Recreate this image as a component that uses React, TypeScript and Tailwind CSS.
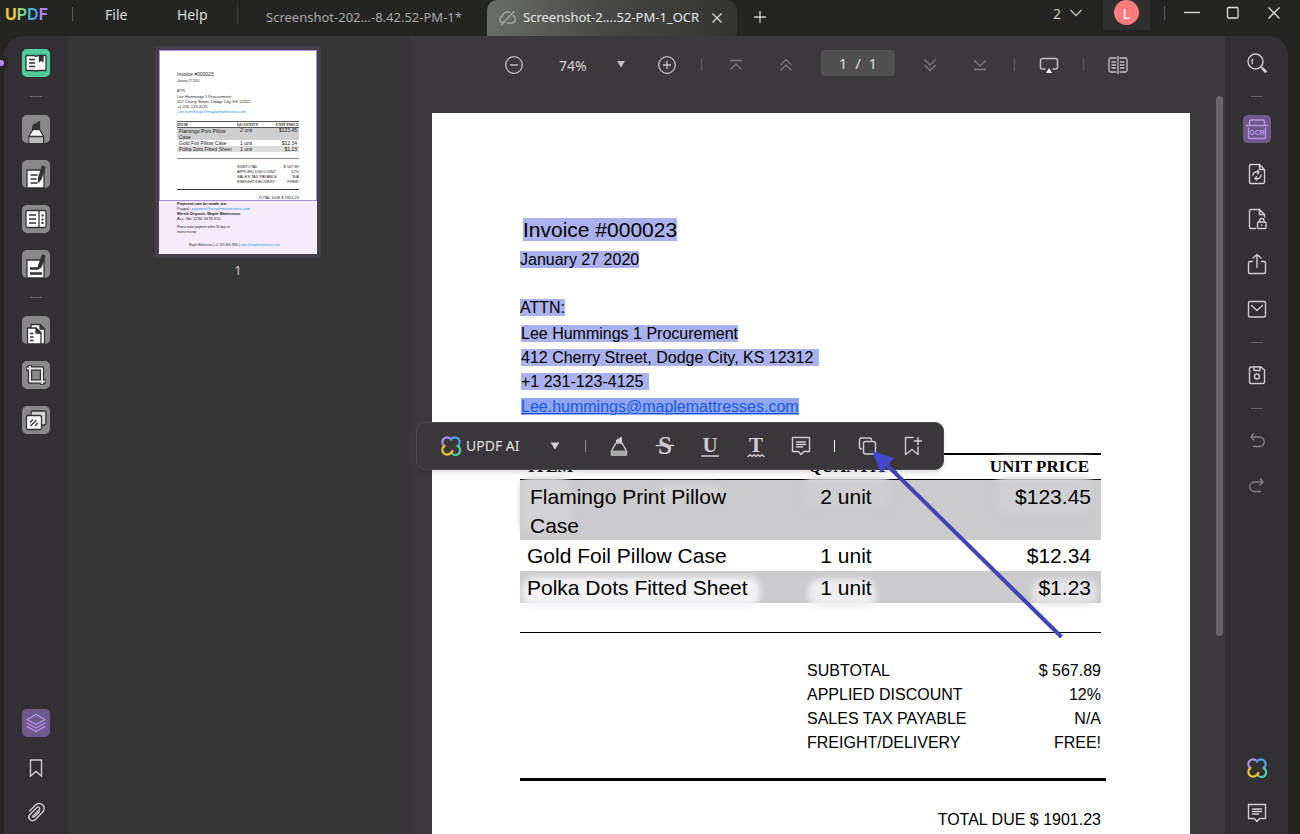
import { useState } from "react";
import type { ReactNode } from "react";
import clsx from "clsx";

interface IconProps {
  children: ReactNode;
  className?: string;
}

// Thin line icon on a 24px grid
function LineIcon({ children, className }: IconProps) {
  return (
    <svg
      width="24"
      height="24"
      viewBox="0 0 24 24"
      fill="none"
      stroke="currentColor"
      strokeWidth="1.4"
      strokeLinecap="round"
      strokeLinejoin="round"
      className={clsx("shrink-0 overflow-visible", className)}
      aria-hidden="true"
    >
      {children}
    </svg>
  );
}

// Filled tool tile on a 28px grid
function TileIcon({ children }: IconProps) {
  return (
    <svg
      width="28"
      height="28"
      viewBox="0 0 28 28"
      fill="none"
      stroke="#333133"
      strokeWidth="1.3"
      strokeLinejoin="round"
      aria-hidden="true"
    >
      {children}
    </svg>
  );
}

function CloverLogo() {
  return (
    <svg width="20" height="20" viewBox="0 0 20 20" fill="none" strokeWidth="2.2" strokeLinecap="round" className="shrink-0 overflow-visible" aria-hidden="true">
      <path d="M10 3.3A4.8 4.8 0 1 0 3.3 10" stroke="#b48cf0" />
      <path d="M10 3.3A4.8 4.8 0 1 1 16.7 10" stroke="#45a5e6" />
      <path d="M16.7 10A4.8 4.8 0 1 1 10.4 16.9" stroke="#4fd3a0" />
      <path d="M3.3 10A4.8 4.8 0 1 0 10 16.7l1.400-1.700" stroke="#f2c12e" />
    </svg>
  );
}

function CommentIcon() {
  return (
    <LineIcon>
      <path d="M3.5 3.5h17v14h-5.8L12 20.5l-2.700-3H3.500z" />
      <path d="M7.500 8h9M7.500 10.500h9M7.500 13h6" />
    </LineIcon>
  );
}

interface Tool {
  label: string;
  icon: ReactNode;
  tile?: string;
}

const leftTools: (Tool | null)[] = [
  {
    label: "Reader",
    tile: "bg-[#4fcb9b]",
    icon: (
      <TileIcon>
        <path d="M4 6.500h7.500q1.500 0 2.500 1 1-1 2.500-1H24v15h-7.500q-1.500 0-2.500 1-1-1-2.500-1H4z" fill="#fff" />
        <path d="M7 10.500h6M7 14h6M7 17.500h6" />
        <path d="M17.500 6.500h3.500v6l-1.700-1.500-1.800 1.500z" fill="#333133" />
      </TileIcon>
    ),
  },
  null,
  {
    label: "Comment",
    tile: "bg-[#8a898a]",
    icon: (
      <TileIcon>
        <path d="M10.500 14.500l.5-4 6.500-4v8z" fill="#333133" />
        <path d="M7 28v-7l4-6.500h6.500l4 6.500v7z" fill="#fff" />
        <path d="M7.500 22h13.500v6H7.500z" fill="#bdbcbd" stroke="none" />
        <path d="M7 21.500h14.500" />
      </TileIcon>
    ),
  },
  {
    label: "Edit",
    tile: "bg-[#8a898a]",
    icon: (
      <TileIcon>
        <path d="M5 28V10h17v18z" fill="#fff" />
        <path d="M8.500 15h7M8.500 19h6M8.500 23h7" />
        <path d="M20.500 6l2.500 1-4 12-2.500 3v-4z" fill="#333133" />
      </TileIcon>
    ),
  },
  {
    label: "Form",
    tile: "bg-[#8a898a]",
    icon: (
      <TileIcon>
        <rect x="4" y="5.500" width="20" height="17" rx="1.500" fill="#fff" />
        <path d="M17 5.500v17M7 10h7M7 14h7M7 18h7" />
        <path d="M19.500 10.500h2M19.500 14.500h2M19.500 18h2" strokeWidth="2" />
      </TileIcon>
    ),
  },
  {
    label: "Fill and sign",
    tile: "bg-[#8a898a]",
    icon: (
      <TileIcon>
        <path d="M5 28V10h17v18z" fill="#fff" />
        <path d="M8 18.500h8M8 23.500h12" strokeWidth="2.600" />
        <path d="M20.500 5l2.500 1-4 11-3 2 .5-3z" fill="#333133" />
      </TileIcon>
    ),
  },
  null,
  {
    label: "Organize pages",
    tile: "bg-[#8a898a]",
    icon: (
      <TileIcon>
        <path d="M9 12V8.500h9l4.500 4.500v15H19" fill="#fff" />
        <path d="M18 8.500l4.500 4.500H18z" fill="#333133" />
        <path d="M5.500 28V12h8.500l5 5v11z" fill="#fff" />
        <path d="M14 12l5 5h-5z" fill="#333133" />
        <path d="M8 17.500h3.500M8 21h3.500M8 24.500h3.500" />
      </TileIcon>
    ),
  },
  {
    label: "Crop",
    tile: "bg-[#8a898a]",
    icon: (
      <TileIcon>
        <path d="M8 4v16.500h16" strokeWidth="4.400" />
        <path d="M4 7.500h16V24" strokeWidth="4.400" />
        <path d="M8 4.800v15.700h15.200" stroke="#e6e5e6" strokeWidth="2" />
        <path d="M4.800 7.500h15.200v15.700" stroke="#e6e5e6" strokeWidth="2" />
      </TileIcon>
    ),
  },
  {
    label: "Background",
    tile: "bg-[#8a898a]",
    icon: (
      <TileIcon>
        <rect x="9" y="5" width="15" height="14" rx="1.500" fill="#d4d3d4" />
        <rect x="4.500" y="9.500" width="15" height="14" rx="1.500" fill="#fff" />
        <path d="M8 16.500l3-3M8.500 20l6-6M13 20l3-3" />
      </TileIcon>
    ),
  },
];

const leftFooterTools: Tool[] = [
  {
    label: "Layers",
    tile: "bg-[#6d5a8a]",
    icon: (
      <LineIcon className="text-[#bb93ef]">
        <path d="M12 3.500l9 5-9 5-9-5z" />
        <path d="M3 12l9 5 9-5M3 15.500l9 5 9-5" />
      </LineIcon>
    ),
  },
  {
    label: "Bookmarks",
    icon: (
      <LineIcon>
        <path d="M6.500 4h11v16L12 15.500 6.500 20z" strokeLinejoin="miter" />
      </LineIcon>
    ),
  },
  {
    label: "Attachments",
    icon: (
      <LineIcon>
        <path d="M8.500 15.500l6.800-6.800a1.600 1.600 0 0 0-2.300-2.300l-7.300 7.300a3.700 3.700 0 0 0 5.200 5.200l7.800-7.800a5 5 0 0 0-7.100-7.100L5.500 10" />
        <path d="M8.500 15.500a1.500 1.500 0 0 0 2.200 0l4.800-4.800" />
      </LineIcon>
    ),
  },
];

const rightTools: (Tool | null)[] = [
  {
    label: "Search",
    icon: (
      <LineIcon>
        <circle cx="10.500" cy="10.500" r="7.500" />
        <path d="M7.500 8.500a3.500 3.500 0 0 0 0 4" />
        <path d="M16 16l1.500 1.500" />
        <path d="M18 18l2.500 2.500" strokeWidth="2.800" />
      </LineIcon>
    ),
  },
  null,
  {
    label: "Recognize text using OCR",
    tile: "bg-[#6d5a8a]",
    icon: (
      <LineIcon className="text-[#bb93ef]">
        <path d="M4.500 8V5a2 2 0 0 1 2-2h11a2 2 0 0 1 2 2v3M1.500 8.500h21" />
        <path d="M3.500 11v9a1.500 1.500 0 0 0 1.500 1.500h14a1.500 1.500 0 0 0 1.500-1.500v-9" />
        <text
          x="12"
          y="18"
          textAnchor="middle"
          fill="currentColor"
          stroke="none"
          className="font-['Liberation_Sans'] text-[7px] font-bold"
        >
          OCR
        </text>
      </LineIcon>
    ),
  },
  {
    label: "Convert",
    icon: (
      <LineIcon>
        <path d="M14.500 2.500H6A1.500 1.500 0 0 0 4.500 4v16A1.500 1.500 0 0 0 6 21.500h12a1.500 1.500 0 0 0 1.500-1.500V7.500zM14.500 2.500v5h5" />
        <path d="M8 13a4 4 0 0 1 5.500-3M12.500 8.500l1.500 1.500-1.500 1.800M16 13a4 4 0 0 1-5.500 3.500M11.500 14.700L10 16.500l1.500 1.500" />
      </LineIcon>
    ),
  },
  {
    label: "Protect",
    icon: (
      <LineIcon>
        <path d="M10.500 21.500H6A1.500 1.500 0 0 1 4.500 20V4A1.500 1.500 0 0 1 6 2.500h8.500l5 5V10M14.500 2.500v5h5" />
        <rect x="12.500" y="15" width="8.500" height="6.500" rx="1" />
        <path d="M14.500 15v-1.200a2.200 2.200 0 0 1 4.500 0V15M16.700 18v.5" />
      </LineIcon>
    ),
  },
  {
    label: "Share",
    icon: (
      <LineIcon>
        <path d="M7.500 9.500H5A1.500 1.500 0 0 0 3.500 11v9A1.500 1.500 0 0 0 5 21.500h14a1.500 1.500 0 0 0 1.500-1.500v-9A1.500 1.500 0 0 0 19 9.500h-2.500" />
        <path d="M12 15.500v-13M8 6l4-3.500L16 6" />
      </LineIcon>
    ),
  },
  {
    label: "Email",
    icon: (
      <LineIcon>
        <rect x="3.500" y="4.500" width="17" height="15.500" rx="1.500" />
        <path d="M6.500 8.500l5.500 5 5.500-5" />
      </LineIcon>
    ),
  },
  null,
  {
    label: "Save",
    icon: (
      <LineIcon>
        <path d="M6 4h10l3.500 3v12a1.500 1.500 0 0 1-1.500 1.500H6A1.500 1.500 0 0 1 4.500 19V5.500A1.500 1.500 0 0 1 6 4z" />
        <path d="M9 4v3.500h6V4" />
        <circle cx="12" cy="13.500" r="2.500" />
      </LineIcon>
    ),
  },
  null,
  {
    label: "Undo",
    icon: (
      <LineIcon className="text-[#858385]">
        <path d="M8.500 5L6 8l3 3M6 8h8.500a4.500 4.500 0 0 1 0 9.500H8.500" />
      </LineIcon>
    ),
  },
  {
    label: "Redo",
    icon: (
      <LineIcon className="text-[#858385]">
        <path d="M15.500 5L18 8l-3 3M18 8H9.500a4.500 4.500 0 0 0 0 9.500h6" />
      </LineIcon>
    ),
  },
];

const rightFooterTools: Tool[] = [
  { label: "UPDF AI", icon: <CloverLogo /> },
  { label: "Comments", icon: <CommentIcon /> },
];

const letterClass = "font-['Liberation_Serif'] text-[21px] font-bold";

const markupTools: Tool[] = [
  {
    label: "Highlight",
    icon: (
      <LineIcon>
        <path d="M9 8.500V6l6-3.500v6z" fill="currentColor" stroke="none" />
        <path d="M4.500 21v-4L9 9h6l4.500 8v4z" />
        <path d="M4.500 16.500h15V21h-15z" fill="#a9a8a9" stroke="none" />
      </LineIcon>
    ),
  },
  {
    label: "Strikethrough",
    icon: (
      <LineIcon>
        <text x="12" y="20" textAnchor="middle" fill="currentColor" stroke="none" className="font-['Liberation_Serif'] text-[25px] font-bold">
          S
        </text>
        <path d="M3.500 11.500h17" strokeWidth="1.700" />
      </LineIcon>
    ),
  },
  {
    label: "Underline",
    icon: (
      <LineIcon>
        <text x="12" y="18" textAnchor="middle" fill="currentColor" stroke="none" className={letterClass}>
          U
        </text>
        <path d="M3.500 22h17" />
      </LineIcon>
    ),
  },
  {
    label: "Squiggly underline",
    icon: (
      <LineIcon>
        <text x="12" y="18" textAnchor="middle" fill="currentColor" stroke="none" className={letterClass}>
          T
        </text>
        <path d="M4 22.500l2-1.700 2 1.700 2-1.700 2 1.700 2-1.700 2 1.700 2-1.700 2 1.700" />
      </LineIcon>
    ),
  },
  { label: "Add note", icon: <CommentIcon /> },
];

const attnLines = [
  { text: "Lee Hummings 1 Procurement", extra: false },
  { text: "412 Cherry Street, Dodge City, KS 12312", extra: true },
  { text: "+1 231-123-4125", extra: true },
];

const totals = [
  ["SUBTOTAL", "$ 567.89"],
  ["APPLIED DISCOUNT", "12%"],
  ["SALES TAX PAYABLE", "N/A"],
  ["FREIGHT/DELIVERY", "FREE!"],
];

function ToolRail({ tools, footer, label }: { tools: (Tool | null)[]; footer: Tool[]; label: string }) {
  const renderTool = (tool: Tool) => (
    <button
      key={tool.label}
      type="button"
      aria-label={tool.label}
      className={clsx(
        "flex size-7 shrink-0 items-center justify-center overflow-hidden rounded-[5px] text-[#cfcdcf]",
        tool.tile
      )}
    >
      {tool.icon}
    </button>
  );

  return (
    <nav aria-label={label} className="flex h-full flex-col items-center justify-between pt-[13px] pb-[7px]">
      <div className="flex flex-col items-center gap-[17px]">
        {tools.map((tool, i) =>
          tool ? (
            renderTool(tool)
          ) : (
            <div key={i} className="flex h-1 items-center">
              <div className="h-px w-3 bg-[#656365]" />
            </div>
          )
        )}
      </div>
      <div className="flex flex-col items-center gap-[17px]">{footer.map(renderTool)}</div>
    </nav>
  );
}

function TitleBar() {
  return (
    <header className="flex h-9 shrink-0 text-[#dededc]">
      <div className="flex h-7 items-center pl-[5px]">
        <div className="flex w-[67px] font-['Inter',sans-serif] text-[16px] leading-6 font-bold">
          <span className="text-[#ecca3c]">U</span>
          <span className="bg-linear-to-r from-[#9fd65a] to-[#4fd39a] bg-clip-text text-transparent">P</span>
          <span className="bg-linear-to-r from-[#45b5d0] to-[#4a9bf0] bg-clip-text text-transparent">D</span>
          <span className="bg-linear-to-r from-[#9d8cf2] to-[#b57df0] bg-clip-text text-transparent">F</span>
        </div>
        <div className="h-3.5 w-px bg-[#5c5c5a]" />
        <button type="button" className="ml-8 w-10 text-left text-[14px]">
          File
        </button>
        <button type="button" className="ml-8 w-10 text-left text-[14px]">
          Help
        </button>
        <div className="ml-5 h-5 w-px bg-[#3d3d3b]" />
      </div>

      <div role="tablist" className="flex items-stretch text-[13px]">
        <button type="button" role="tab" aria-selected="false" className="w-[249px] pl-7 text-left whitespace-nowrap text-[#a9a9a7]">
          Screenshot-202...-8.42.52-PM-1*
        </button>
        <div className="flex w-[250px] items-center rounded-t-[10px] bg-linear-to-r from-[#6b6d6a] via-[#464745] to-[#333432] pl-3">
          <svg width="18" height="16" viewBox="0 0 18 16" fill="none" stroke="#a5a6a4" strokeWidth="1.400" strokeLinecap="round" aria-hidden="true">
            <path d="M5 12.500H4a3.200 3.200 0 0 1-.6-6.300A5 5 0 0 1 11 2.500M14 5.500a4 4 0 0 1-.5 7.500H8.500M3 14.500L15 1.500" />
          </svg>
          <button type="button" role="tab" aria-selected="true" className="ml-1.5 whitespace-nowrap text-[#e8e8e6]">
            Screenshot-2....52-PM-1_OCR
          </button>
          <button type="button" aria-label="Close tab" className="ml-3">
            <svg width="12" height="12" viewBox="0 0 12 12" stroke="#d8d8d6" strokeWidth="1.300" aria-hidden="true">
              <path d="M1.500 1.500l9 9M10.500 1.500l-9 9" />
            </svg>
          </button>
        </div>
        <button type="button" aria-label="New tab" className="ml-4 pb-0.5">
          <svg width="14" height="14" viewBox="0 0 14 14" stroke="#d0d0ce" strokeWidth="1.300" aria-hidden="true">
            <path d="M7 1v12M1 7h12" />
          </svg>
        </button>
      </div>

      <div className="ml-auto flex h-[26px] items-center pr-[19px]">
        <button type="button" className="flex items-center gap-2 text-[14px] text-[#c4c4c2]">
          2
          <svg width="14" height="8" viewBox="0 0 14 8" fill="none" stroke="currentColor" strokeWidth="1.300" aria-hidden="true">
            <path d="M1.500 1L7 6.500 12.500 1" />
          </svg>
        </button>
        <div className="ml-5 flex h-[30px] w-[47px] justify-center self-start bg-[#2f2f2f]">
          <button type="button" aria-label="Account L" className="size-[25px] rounded-full bg-[#fc7b7d] pt-0.5 text-[15px] leading-[23px] text-white">
            L
          </button>
        </div>
        <div className="ml-3.5 h-3.5 w-px bg-[#5c5c5a]" />
        <button type="button" aria-label="Minimize" className="ml-[19px]">
          <svg width="16" height="14" viewBox="0 0 16 14" stroke="#dededc" strokeWidth="1.300" aria-hidden="true">
            <path d="M0 6.500h16" />
          </svg>
        </button>
        <button type="button" aria-label="Maximize" className="ml-[26px]">
          <svg width="14" height="14" viewBox="0 0 14 14" fill="none" stroke="#dededc" strokeWidth="1.300" aria-hidden="true">
            <rect x="1.500" y="1.500" width="10.500" height="10.500" rx="1" />
          </svg>
        </button>
        <button type="button" aria-label="Close window" className="ml-[27px]">
          <svg width="14" height="14" viewBox="0 0 14 14" stroke="#dededc" strokeWidth="1.300" aria-hidden="true">
            <path d="M1.500 1.500l11 11M12.500 1.500l-11 11" />
          </svg>
        </button>
      </div>
    </header>
  );
}

function ThumbnailPanel() {
  return (
    <aside className="flex w-[342px] shrink-0 flex-col items-center bg-[#373637] pt-2.5 pr-0.5">
      <button
        type="button"
        aria-label="Page 1"
        className="rounded-[4px] border-4 border-[#43404a] text-left font-['Liberation_Sans',sans-serif] text-[4px] leading-[5px] text-[#222]"
      >
        <div className="flex h-[204px] w-[158px] flex-col bg-white">
          <div className="h-[151px] border border-[#a68fd8] px-[17px] pt-[21px]">
            <p className="text-[5px]">Invoice #000023</p>
            <p className="mt-0.5 text-[3px]">January 27 2020</p>
            <p className="mt-[5px] text-[3px]">ATTN:</p>
            <p>Lee Hummings 1 Procurement</p>
            <p>412 Cherry Street, Dodge City, KS 12312</p>
            <p>+1 231-123-4125</p>
            <p className="text-[#2f8fe0]">Lee.hummings@maplemattresses.com</p>
            <div className="mt-[7px] flex justify-between border-y border-[#555] font-['Liberation_Serif',serif] font-bold">
              <span>ITEM</span>
              <span className="ml-8">QUANTITY</span>
              <span>UNIT PRICE</span>
            </div>
            <div className="flex h-3 bg-[#cfcfcf] px-0.5">
              <span className="w-[61px] pr-3 text-[5px] leading-[6px]">Flamingo Print Pillow Case</span>
              <span className="text-[5px]">2 unit</span>
              <span className="ml-auto text-[5px]">$123.45</span>
            </div>
            <div className="flex h-1.5 px-0.5 text-[5px] leading-[6px]">
              <span className="w-[61px]">Gold Foil Pillow Case</span>
              <span>1 unit</span>
              <span className="ml-auto">$12.34</span>
            </div>
            <div className="flex h-1.5 bg-[#dcdcdc] px-0.5 text-[5px] leading-[6px]">
              <span className="w-[61px]">Polka Dots Fitted Sheet</span>
              <span>1 unit</span>
              <span className="ml-auto">$1.23</span>
            </div>
            <div className="mt-1.5 h-px bg-[#8a8a8a]" />
            <div className="mt-[5px] ml-auto w-[62px] text-[4px]">
              {totals.map(([label, amount]) => (
                <p key={label} className="flex justify-between">
                  <span>{label}</span>
                  <span>{amount}</span>
                </p>
              ))}
            </div>
            <div className="mt-[5px] h-px bg-[#333]" />
            <p className="mt-[5px] text-right text-[4px]">TOTAL DUE $ 1901.23</p>
          </div>
          <div className="flex-1 bg-[#f4ebfc] pl-[18px] text-[4px]">
            <p className="font-bold">Payment can be made via:</p>
            <p>
              Paypal: <span className="text-[#2f8fe0]">payment@maplemattresses.com</span>
            </p>
            <p className="font-bold">Wire/e Deposit: Maple Mattresses</p>
            <p>Acc. No: 1234-5678-910</p>
            <p className="mt-1 text-[3px]">Please make payment within 30 days of</p>
            <p className="text-[3px]">invoice receipt</p>
            <p className="mt-2 pl-3 text-[3px]">
              Maple Mattresses | +1 123-456-7890 | <span className="text-[#2f8fe0]">sales@maplemattresses.com</span>
            </p>
          </div>
        </div>
      </button>
      <p className="mt-[3px] text-[13px] text-[#c8c6c8]">1</p>
    </aside>
  );
}

function ViewerToolbar() {
  const [page, setPage] = useState("1  /  1");
  const divider = <div className="-mx-px h-3 w-px bg-[#5f5d5f]" />;
  const stroke = { fill: "none", stroke: "currentColor", strokeWidth: 1.3 };

  return (
    <div className="flex h-[58px] shrink-0 items-center justify-center gap-[25px] pr-[3px] text-[#c4c2c4]">
      <button type="button" aria-label="Zoom out">
        <svg width="20" height="20" viewBox="0 0 20 20" {...stroke}>
          <circle cx="10" cy="10" r="8.300" />
          <path d="M6 10h8" />
        </svg>
      </button>
      <div className="relative w-[83px]">
        <select
          aria-label="Zoom level"
          defaultValue="74%"
          className="w-full appearance-none bg-transparent pl-2.5 text-[14px] text-[#d6d4d6] outline-none"
        >
          <option>74%</option>
          <option>100%</option>
        </select>
        <svg width="10" height="7" viewBox="0 0 10 7" className="pointer-events-none absolute top-2 right-1.5">
          <path d="M1 0h8L5 6.500z" fill="currentColor" />
        </svg>
      </div>
      <button type="button" aria-label="Zoom in">
        <svg width="20" height="20" viewBox="0 0 20 20" {...stroke}>
          <circle cx="10" cy="10" r="8.300" />
          <path d="M6 10h8M10 6v8" />
        </svg>
      </button>
      {divider}
      <div className="flex gap-[30px] text-[#7d7b7d]">
        <button type="button" aria-label="First page">
          <svg width="20" height="20" viewBox="0 0 20 20" {...stroke}>
            <path d="M4 5.500h12M4.500 14.500L10 9l5.500 5.500" />
          </svg>
        </button>
        <button type="button" aria-label="Previous page">
          <svg width="20" height="20" viewBox="0 0 20 20" {...stroke}>
            <path d="M4.500 10L10 4.500l5.500 5.500M4.500 15.500L10 10l5.500 5.500" />
          </svg>
        </button>
      </div>
      <input
        aria-label="Page number"
        value={page}
        onChange={(e) => setPage(e.target.value)}
        className="-mt-1 h-[26px] w-[74px] rounded-[4px] bg-[#515051] text-center text-[15px] text-[#dcdadc] outline-none"
      />
      <div className="flex gap-[30px] text-[#7d7b7d]">
        <button type="button" aria-label="Next page">
          <svg width="20" height="20" viewBox="0 0 20 20" {...stroke}>
            <path d="M4.500 4.500L10 10l5.500-5.500M4.500 10l5.500 5.500 5.500-5.500" />
          </svg>
        </button>
        <button type="button" aria-label="Last page">
          <svg width="20" height="20" viewBox="0 0 20 20" {...stroke}>
            <path d="M4 14.500h12M4.500 5.500L10 11l5.500-5.500" />
          </svg>
        </button>
      </div>
      {divider}
      <button type="button" aria-label="Slideshow">
        <svg width="20" height="20" viewBox="0 0 20 20" {...stroke} strokeWidth="1.500">
          <path d="M6.500 14H3a1.500 1.500 0 0 1-1.500-1.500v-7A2 2 0 0 1 3.500 3.500h13a2 2 0 0 1 2 2v7A1.500 1.500 0 0 1 17 14h-3.500" />
          <path d="M10 13l3 5H7z" fill="#fff" stroke="none" />
        </svg>
      </button>
      {divider}
      <button type="button" aria-label="Two page view">
        <svg width="20" height="20" viewBox="0 0 20 20" {...stroke}>
          <path d="M8.500 3H2.500A1.500 1.500 0 0 0 1 4.500v11A1.500 1.500 0 0 0 2.500 17h6M11.500 3h6A1.500 1.500 0 0 1 19 4.500v11a1.500 1.500 0 0 1-1.500 1.500h-6M10 1v18" />
          <path d="M3.500 7H8M3.500 10H8M3.500 13H8M12 7h4.500M12 10h4.500M12 13h4.500" />
        </svg>
      </button>
    </div>
  );
}

function SelectionToolbar() {
  const renderTool = (tool: Tool) => (
    <button key={tool.label} type="button" aria-label={tool.label}>
      {tool.icon}
    </button>
  );

  return (
    <div
      role="toolbar"
      aria-label="Text selection"
      className="absolute top-[309px] -left-4 z-20 flex h-12 items-center gap-[21px] rounded-[9px] border border-[#4b494b] bg-[#393739] pr-[18px] pl-6 text-[#cfcdcf] shadow-md"
    >
      <div className="flex gap-[30px] pr-[3px]">
        <button type="button" className="flex w-[78px] items-center gap-[5px] text-[14px] whitespace-nowrap text-[#e4e2e4] font-['Noto_Sans',sans-serif]">
          <CloverLogo />
          UPDF AI
        </button>
        <button type="button" aria-label="More AI actions">
          <svg width="12" height="8" viewBox="0 0 12 8" aria-hidden="true">
            <path d="M1.500 0.500h9L6 7.500z" fill="currentColor" />
          </svg>
        </button>
      </div>
      <div className="h-3 w-px bg-[#8a888a]" />
      <div className="flex w-[206px] justify-between">{markupTools.map(renderTool)}</div>
      <div className="h-3 w-px bg-white" />
      <button type="button" aria-label="Copy">
        <LineIcon>
          <path d="M5.500 15A2 2 0 0 1 3.500 13V6a2 2 0 0 1 2-2h8a2 2 0 0 1 2 2" />
          <rect x="7.500" y="7.500" width="12" height="12.500" rx="2" />
        </LineIcon>
      </button>
      <button type="button" aria-label="Add bookmark">
        <LineIcon>
          <path d="M12 3.500H4.500V20.500L11 15.500l6 5V13M17 3.500v7M13.500 7h7" />
        </LineIcon>
      </button>
    </div>
  );
}

// Pale scan smear between a row's shading and its text
function Smear({ className }: { className: string }) {
  return <span aria-hidden="true" className={clsx("absolute rounded-xl blur-[3px]", className)} />;
}

function Shade() {
  return <span aria-hidden="true" className="absolute inset-0 -z-10 bg-[#cbcacc]" />;
}

function InvoicePage() {
  return (
    <article className="relative isolate ml-[22px] flex-1 bg-white pt-[105px] pr-[89px] pl-[88px] font-['Liberation_Sans',sans-serif] text-[16px] leading-6 text-black">
      <h1 className="pl-[3px] text-[21px] leading-6">
        <span className="bg-[#abb1ec]">Invoice #000023</span>
      </h1>
      <p className="mt-1.5">
        <span className="bg-[#abb1ec]">January 27 2020</span>
      </p>
      <p className="mt-6 mb-0.5">
        <span className="bg-[#abb1ec]">ATTN:</span>
      </p>
      {attnLines.map((line) => (
        <p key={line.text} className="pl-px">
          <span className={clsx("bg-[#abb1ec]", line.extra && "pr-1.5")}>{line.text}</span>
        </p>
      ))}
      <p className="mt-px pl-px">
        <a href="#mail" className="bg-[#8fa6ee] text-[#1c58e8] underline">
          Lee.hummings@maplemattresses.com
        </a>
      </p>

      <table className="mt-[34px] w-full table-fixed border-collapse text-[21px]">
        <colgroup>
          <col className="w-[51%]" />
          <col className="w-[18%]" />
          <col />
        </colgroup>
        <thead className="border-t-2 border-black font-['Liberation_Serif',serif] text-[17px]">
          <tr className="h-[25px] border-b border-black leading-6 whitespace-nowrap">
            <th className="relative pl-2 text-left font-bold">
              <Smear className="top-2 left-1 h-4 w-10 bg-white" />
              <span className="relative z-10">ITEM</span>
            </th>
            <th className="relative text-left font-bold">
              <Smear className="top-2 -left-3 h-4 w-[86px] bg-white" />
              <span className="absolute top-0 -left-2 z-10">QUANTITY</span>
            </th>
            <th className="relative pr-3 text-right font-bold">
              <Smear className="top-0.5 right-1.5 h-[22px] w-[102px] bg-white" />
              <span className="relative z-10">UNIT PRICE</span>
            </th>
          </tr>
        </thead>
        <tbody>
          <tr className="h-[60px] align-top leading-[29px]">
            <td className="relative pt-0.5 pr-[70px] pl-2.5">
              <Shade />
              <Smear className="-top-0.5 left-0 h-14 w-[52px] bg-[#d3d2d4]" />
              <Smear className="top-1 left-[140px] h-4 w-[60px] bg-[#d3d2d4]" />
              <span className="relative z-10">Flamingo Print Pillow Case</span>
            </td>
            <td className="relative pt-0.5 pl-1">
              <Shade />
              <Smear className="-top-0.5 -left-3 h-8 w-[86px] bg-[#cfced0]" />
              <span className="relative z-10">2 unit</span>
            </td>
            <td className="relative pt-0.5 pr-2.5 text-right">
              <Shade />
              <Smear className="-top-0.5 right-1.5 h-9 w-[98px] bg-[#d0cfd1]" />
              <span className="relative z-10">$123.45</span>
            </td>
          </tr>
          <tr className="h-[30px] leading-[30px]">
            <td className="pt-px pl-[7px]">Gold Foil Pillow Case</td>
            <td className="pt-px pl-1">1 unit</td>
            <td className="pt-px pr-2.5 text-right">$12.34</td>
          </tr>
          <tr className="h-8 leading-[31px]">
            <td className="relative pt-px pl-[7px]">
              <Shade />
              <Smear className="top-1.5 left-0.5 h-[30px] w-[238px] bg-[#f3f2f4]" />
              <span className="relative z-10">Polka Dots Fitted Sheet</span>
            </td>
            <td className="relative pt-px pl-1">
              <Shade />
              <Smear className="top-2 -left-2 h-7 w-[68px] bg-[#efeef0]" />
              <span className="relative z-10">1 unit</span>
            </td>
            <td className="relative pt-px pr-2.5 text-right">
              <Shade />
              <Smear className="top-2 right-1 h-[26px] w-[66px] bg-[#e4e3e5]" />
              <span className="relative z-10">$1.23</span>
            </td>
          </tr>
        </tbody>
      </table>

      <div className="mt-[29px] h-px bg-black" />
      <dl className="mt-[26px] ml-auto w-[294px]">
        {totals.map(([label, amount]) => (
          <div key={label} className="flex justify-between">
            <dt>{label}</dt>
            <dd>{amount}</dd>
          </div>
        ))}
      </dl>
      <div className="mt-[23px] -mr-[5px] h-[3px] bg-black" />
      <p className="mt-[27px] text-right">TOTAL DUE $ 1901.23</p>

      <SelectionToolbar />

      {/* Pointer to the copy button */}
      <svg width="194" height="190" viewBox="0 0 194 190" className="absolute top-[337px] left-[440px] z-30" aria-hidden="true">
        <path d="M14 14L189.500 187" stroke="#4145b4" strokeWidth="4" />
        <path d="M0 1L22 8 9 23z" fill="#4448cc" />
      </svg>
    </article>
  );
}

export default function App() {
  return (
    <div className="flex h-screen flex-col overflow-hidden bg-[#242523] font-['Noto_Sans',sans-serif]">
      <TitleBar />
      <div className="relative mr-3 ml-1 flex min-h-0 flex-1 overflow-hidden rounded-t-[20px]">
        <div className="w-16 shrink-0 bg-[#323032]">
          <ToolRail tools={leftTools} footer={leftFooterTools} label="Tools" />
        </div>
        <ThumbnailPanel />
        <main className="flex min-w-0 flex-1 flex-col bg-[#3b393b]">
          <ViewerToolbar />
          <div className="flex min-h-0 flex-1">
            <div className="flex min-h-0 flex-1 pt-[19px]">
              <InvoicePage />
            </div>
            <div className="mt-0.5 mr-0.5 ml-[26px] h-[540px] w-[7px] rounded-full bg-[#676567]" />
          </div>
        </main>
        <div className="w-[63px] shrink-0 bg-[#323032]">
          <ToolRail tools={rightTools} footer={rightFooterTools} label="Document actions" />
        </div>
      </div>
      {/* Panel drag handle on the window edge */}
      <span className="absolute top-[55px] -left-2 flex size-4 items-center justify-end rounded-full bg-[#242523] pr-1">
        <span className="size-1.5 rounded-full bg-[#b08df0]" />
      </span>
    </div>
  );
}
